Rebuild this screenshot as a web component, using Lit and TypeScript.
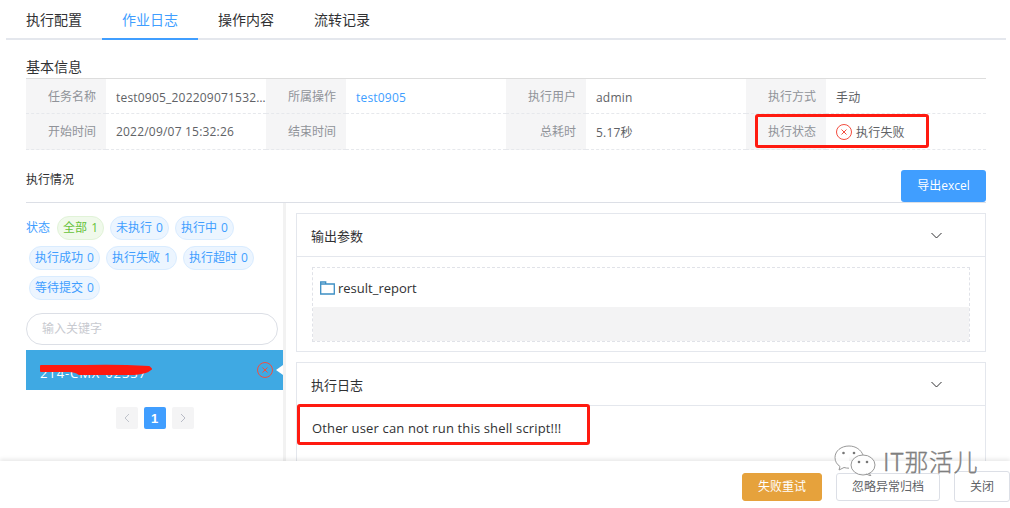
import { LitElement, html, css } from "lit";
import { customElement } from "lit/decorators.js";

const failIcon = (size: number) => html`<svg class="fail" width=${size} height=${size} viewBox="0 0 16 16" fill="none" stroke="#f34d3f" stroke-width="1">
  <circle cx="8" cy="8" r="7.5"></circle><path d="M5.500 5.500l5 5M10.500 5.500l-5 5"></path></svg>`;

const chevron = html`<svg class="chev" width="11" height="7" viewBox="0 0 11 7" fill="none" stroke="#303133" stroke-width="1"><path d="M.5 1l5 5 5-5"></path></svg>`;

@customElement("app-root")
export class AppRoot extends LitElement {
  static styles = css`
    :host { display: block; width: 1010px; height: 508px; position: relative; overflow: hidden; background: #fff;
      font-family: "Open Sans", "Noto Sans CJK SC", sans-serif; font-size: 12px; color: #606266; }
    .main { height: 461px; overflow: hidden; box-sizing: border-box; }
    .tabs { display: flex; margin: 0 4px 0 6px; height: 38px; border-bottom: 2px solid #e4e7ed; }
    .tab { width: 96px; height: 40px; box-sizing: border-box; text-align: center; line-height: 40px; font-size: 14px; color: #303133; }
    .tab.active { color: #409eff; border-bottom: 2px solid #409eff; }
    .content { padding: 0 24px 0 26px; }
    .sec { height: 38px; box-sizing: border-box; padding-top: 17px; font-size: 14px; line-height: 20px; color: #303133; }
    .table { border-top: 1px solid #ddd; display: grid; grid-template-columns: repeat(4, 80px 160px); }
    .l, .v { height: 35px; border-bottom: 1px dashed #e6e8ec; box-sizing: border-box; white-space: nowrap; overflow: hidden; }
    .l { background: #f5f5f6; color: #909399; text-align: right; padding-right: 10px; line-height: 36px; }
    .v { padding: 2px 0 0 10px; letter-spacing: 0.2px; display: flex; align-items: center; }
    .v.tall, .l.tall { height: 36px; }
    .v.tall { padding-top: 0; }
    .link { color: #409eff; }
    .trunc { display: block; overflow: hidden; text-overflow: ellipsis; width: 150px; }
    .fail { flex: none; }
    .v .fail { margin-right: 4px; }
    .head { margin-top: 20px; height: 33px; box-sizing: border-box; border-bottom: 1px solid #dcdfe6; display: flex; justify-content: space-between; }
    .head span { color: #303133; line-height: 20px; }
    .export { width: 85px; height: 32px; background: #409eff; color: #fff; border-radius: 3px; text-align: center; line-height: 32px; }
    .body { display: flex; }
    .left { width: 257px; flex: none; border-right: 3px solid #f2f2f2; height: 260px; }
    .tags { display: flex; flex-wrap: wrap; align-items: center; padding-top: 10px; width: 250px; }
    .st { color: #409eff; margin-right: 4px; line-height: 30px; }
    .tag { margin: 3px; height: 24px; line-height: 22px; box-sizing: border-box; border-radius: 12px; padding: 0 5px; word-spacing: 1px; border: 1px solid #d9ecff; background: #ecf5ff; color: #409eff; white-space: nowrap; }
    .tag.green { background: #f0f9eb; border-color: #e1f3d8; color: #67c23a; }
    .search { width: 252px; height: 32px; box-sizing: border-box; margin-top: 10px; border: 1px solid #dcdfe6; border-radius: 16px; padding-left: 15px; line-height: 30px; color: #c8cad0; }
    .item { margin-top: 5px; height: 40px; background: #3fa9e3; display: flex; align-items: center; justify-content: space-between; position: relative; padding-left: 14px; padding-right: 10px; color: #fff; }
    .scribble { position: absolute; left: 13px; top: 13px; }
    .item .arrow { position: absolute; right: 0; top: 15px; width: 0; height: 0; border: 5px solid transparent; border-right: 7px solid #fff; border-left: 0; }
    .item .name { padding-top: 6px; font-size: 13px; letter-spacing: 0.9px; }
    .pager { display: flex; justify-content: center; gap: 6px; margin-top: 17px; }
    .pg { width: 22px; height: 22px; border-radius: 2px; background: #f4f4f5; display: flex; align-items: center; justify-content: center; }
    .pg.on { background: #409eff; color: #fff; font-weight: 700; font-size: 13px; font-family: "Liberation Sans", sans-serif; }
    .right { flex: 1; padding: 10px 0 0 10px; min-width: 0; }
    .panel { border: 1px solid #e4e7ed; box-sizing: border-box; }
    .panel + .panel { margin-top: 10px; height: 200px; }
    .ph { height: 43px; border-bottom: 1px solid #e4e7ed; box-sizing: border-box; display: flex; align-items: center; justify-content: space-between; padding: 0 43px 0 14px; font-size: 13px; color: #303133; }
    .outer { padding: 10px 15px 9px 15px; }
    .dash { border: 1px dashed #e0e2e8; height: 75px; box-sizing: border-box; display: flex; flex-direction: column; }
    .file { height: 39px; display: flex; align-items: center; padding-left: 7px; gap: 3px; font-size: 13px; color: #303133; }
    .grey { flex: 1; background: #f3f3f4; }
    .log { padding: 12px 15px; font-size: 13px; letter-spacing: 0.15px; line-height: 20px; color: #303133; }
    .footer { height: 47px; position: relative; box-shadow: 0 -2px 4px rgba(0,0,0,.09); background: #fff; display: flex; justify-content: flex-end; align-items: center; gap: 14px; box-sizing: border-box; padding-top: 4px; }
    .btn { height: 28px; box-sizing: border-box; border: 1px solid #dcdfe6; border-radius: 3px; text-align: center; line-height: 26px; color: #606266; background: #fff; }
    .btn.retry { width: 80px; background: #e6a23c; border-color: #e6a23c; color: #fff; }
    .btn.ignore { width: 104px; }
    .btn.close { width: 56px; height: 31px; line-height: 29px; margin-top: -1px; }
    .mark { position: absolute; left: 755px; top: 114px; width: 174px; height: 34px; box-sizing: border-box; border: 3px solid #ff1a10; border-radius: 3px; }
    .mark.two { left: 297px; top: 404px; width: 293px; height: 41px; }
    .wm { position: absolute; left: 834px; top: 445px; display: flex; align-items: center; gap: 7px; }
    .wm span { font-size: 24px; letter-spacing: 0.5px; line-height: 30px; color: #8a8a8a; -webkit-text-stroke: 0.3px #666; text-shadow: 0 0 1px #fff; font-family: "Noto Sans CJK SC", sans-serif; font-weight: 300; }
  `;

  render() {
    const tabs = ["执行配置", "作业日志", "操作内容", "流转记录"];
    const tags = ["全部 1", "未执行 0", "执行中 0", "执行成功 0", "执行失败 1", "执行超时 0", "等待提交 0"];
    return html`
      <div class="main">
        <div class="tabs">${tabs.map((t, i) => html`<div class="tab ${i === 1 ? "active" : ""}">${t}</div>`)}</div>
        <div class="content">
          <div class="sec">基本信息</div>
          <div class="table">
            <div class="l">任务名称</div><div class="v"><span class="trunc">test0905_202209071532...</span></div>
            <div class="l">所属操作</div><div class="v link">test0905</div>
            <div class="l">执行用户</div><div class="v">admin</div>
            <div class="l">执行方式</div><div class="v">手动</div>
            <div class="l tall">开始时间</div><div class="v tall">2022/09/07 15:32:26</div>
            <div class="l tall">结束时间</div><div class="v tall"></div>
            <div class="l tall">总耗时</div><div class="v tall">5.17秒</div>
            <div class="l tall">执行状态</div><div class="v tall">${failIcon(16)}执行失败</div>
          </div>
          <div class="head"><span>执行情况</span><div class="export">导出excel</div></div>
          <div class="body">
            <div class="left">
              <div class="tags">
                <span class="st">状态</span>
                ${tags.map((t, i) => html`<span class="tag ${i === 0 ? "green" : ""}">${t}</span>`)}
              </div>
              <div class="search">输入关键字</div>
              <div class="item">
                <span class="name">214-CMX-02337</span>
                <svg class="scribble" width="114" height="13" viewBox="0 0 114 13"><path d="M2 3h44q30-1 64 1l2 2-3 2q-6 3-20 3H40q-4-3-10-3H2z" fill="#ff1a10" stroke="#ff1a10" stroke-width="2" stroke-linejoin="round"></path></svg>
                ${failIcon(16)}
                <i class="arrow"></i>
              </div>
              <div class="pager">
                <div class="pg"><svg width="8" height="10" viewBox="0 0 8 10" fill="none" stroke="#c0c4cc"><path d="M6 1L2 5l4 4"></path></svg></div>
                <div class="pg on">1</div>
                <div class="pg"><svg width="8" height="10" viewBox="0 0 8 10" fill="none" stroke="#b8bbc6"><path d="M2 1l4 4-4 4"></path></svg></div>
              </div>
            </div>
            <div class="right">
              <div class="panel">
                <div class="ph">输出参数 ${chevron}</div>
                <div class="outer"><div class="dash">
                  <div class="file"><svg width="15" height="14" viewBox="0 0 15 14" fill="none" stroke="#3d8fc4" stroke-width="1.300"><path d="M.7 3h13.600v10H.7zM.7 3V1h5v2"></path></svg>result_report</div>
                  <div class="grey"></div>
                </div></div>
              </div>
              <div class="panel">
                <div class="ph">执行日志 ${chevron}</div>
                <div class="log">Other user can not run this shell script!!!</div>
              </div>
            </div>
          </div>
        </div>
      </div>
      <div class="footer">
        <div class="btn retry">失败重试</div>
        <div class="btn ignore">忽略异常归档</div>
        <div class="btn close">关闭</div>
      </div>
      <div class="mark"></div>
      <div class="mark two"></div>
      <div class="wm">
        <svg width="42" height="31" viewBox="0 0 42 31" fill="none" stroke="#999" stroke-width="1">
          <path d="M15 1C7 1 1 6 1 12.500c0 4 2 7 5 9L5 25l5-2.500c2 .5 3 .7 5 .7" fill="#fff" fill-opacity=".7"></path>
          <path d="M15 1c7 0 12 4 14 9"></path>
          <ellipse cx="29" cy="20" rx="12" ry="10" fill="#fff" fill-opacity=".8"></ellipse>
          <path d="M35 28l2 3-5-2"></path>
          <circle cx="9.500" cy="8" r="1.300" fill="#777" stroke="none"></circle><circle cx="20" cy="8" r="1.300" fill="#777" stroke="none"></circle>
          <circle cx="25" cy="17" r="1.300" fill="#777" stroke="none"></circle><circle cx="33" cy="17" r="1.300" fill="#777" stroke="none"></circle>
        </svg>
        <span>IT那活儿</span>
      </div>
    `;
  }
}
